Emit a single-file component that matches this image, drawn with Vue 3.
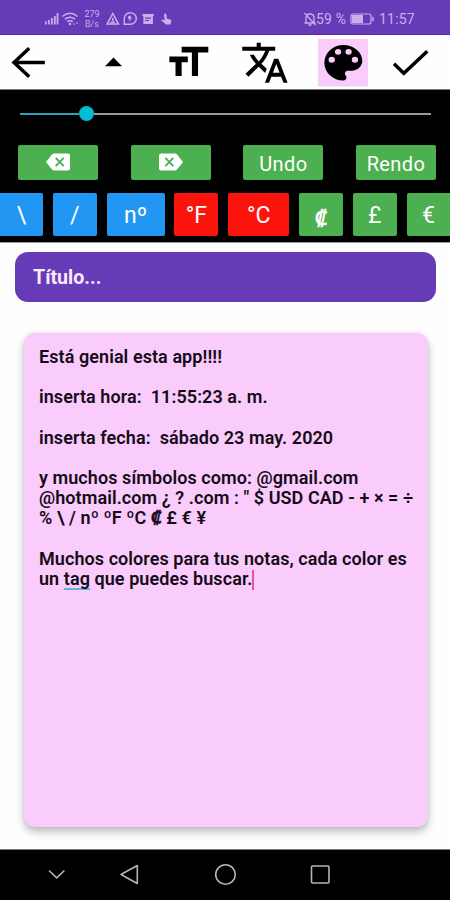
<script setup>
const symbols = [
  { label: '\\', kind: 'blue', wide: 'first' },
  { label: '/', kind: 'blue', wide: '' },
  { label: 'nº', kind: 'blue', wide: 'mid' },
  { label: '°F', kind: 'red', wide: '' },
  { label: '°C', kind: 'red', wide: 'large' },
  { label: '₡', kind: 'green', wide: 'heavy' },
  { label: '£', kind: 'green', wide: '' },
  { label: '€', kind: 'green', wide: '' },
]
</script>

<template>
  <div class="screen">
    <header class="status">
      <svg class="signals" width="40" height="20" viewBox="40 9 40 20">
        <path d="M45.8 24.5v-3M48.8 24.5v-4.5M51.8 24.5v-6.5M54.8 24.5v-8.5M57.5 24.5V13" stroke="currentColor" stroke-width="1.8" />
        <g fill="none" stroke="currentColor" stroke-width="1.6">
          <path d="M62.3 16.5q7.7-6.5 15.2 0M65 19.2q5-4 10 0M67.2 21.7q2.8-2 5.6 0" />
        </g>
        <circle cx="70" cy="24" r="1.3" fill="currentColor" />
        <path d="M74 23v2M77 22v2" stroke="currentColor" />
      </svg>
      <div class="rate"><span>279</span><span>B/s</span></div>
      <svg class="notices" width="72" height="20" viewBox="104 9 72 20">
        <g fill="none" stroke="currentColor" stroke-width="1.5">
          <path d="M112.8 13.5l5.7 10.6h-11.4zM112.8 18v3M110.5 22.3h4.5" />
          <path d="M124.3 24.3v-5.5a6 5.8 0 1 1 6 5.5z" />
        </g>
        <path d="M128.5 15.8h2.8l-.8 2h1.7l-3.4 4 .7-3h-1.7z" fill="currentColor" />
        <path fill-rule="evenodd" d="M142.5 14h11.2v2h-.8v8h-9.5v-8h-.9zM145 17.5v1.2h6v-1.2zm0 2.5v1h4v-1z" fill="currentColor" />
        <path d="M164.2 14q1.7-1.2 2.2.6l.5 4.2 3.6.8q1 .3.8 1.6l-.7 3.3h-4.7l-4.7-4.3q.4-1.2 2.1-.3l1.4.7-.7-5.4z" fill="currentColor" />
      </svg>
      <div class="spacer"></div>
      <svg class="bell" width="14" height="16" viewBox="0 0 14 16">
        <path d="M1.5 12h11M3 11.5V7q0-4 4-4 4 0 4 4v4.5M5.5 14h3M1.5 2l11 12" fill="none" stroke="currentColor" stroke-width="1.3" />
      </svg>
      <span class="percent">59 %</span>
      <svg class="battery" width="25" height="12" viewBox="0 0 25 12">
        <rect x="1" y="1" width="20" height="10" rx="2" fill="none" stroke="currentColor" stroke-width="1.2" />
        <rect x="2" y="2" width="11" height="8" fill="currentColor" />
        <path d="M23 4v4" stroke="currentColor" stroke-width="1.5" />
      </svg>
      <span class="clock">11:57</span>
    </header>

    <nav class="toolbar">
      <svg viewBox="0 35 75 54"><path d="M44.8 62.5H14M29.2 48.3L14 62.5l15.2 14.3" fill="none" stroke="#000" stroke-width="3.5" /></svg>
      <svg viewBox="75 35 76 54"><path d="M105 66.2l8.5-8.6 8.5 8.6z" /></svg>
      <svg viewBox="151 35 76 54"><path transform="translate(163.2 38.8) scale(2.05 1.96)" d="M9 4v3h5v12h3V7h5V4H9zm-6 8h3v7h3v-7h3V9H3v3z" /></svg>
      <svg viewBox="227 35 77 54"><path transform="translate(240.2 38.7) scale(2.06 2)" d="M12.87 15.07l-2.54-2.51.03-.03c1.74-1.94 2.98-4.17 3.71-6.53H17V4h-7V2H8v2H1v1.99h11.17C11.5 7.92 10.44 9.75 9 11.35 8.07 10.32 7.3 9.19 6.69 8h-2c.73 1.63 1.73 3.17 2.98 4.56l-5.09 5.02L4 19l5-5 3.11 3.11.76-2.04zM18.5 10h-2L12 22h2l1.12-3h4.75L21 22h2l-4.5-12zm-2.62 7l1.62-4.33L19.12 17h-3.24z" /></svg>
      <svg viewBox="304 35 78 54">
        <rect x="318" y="39" width="50" height="47.5" fill="#f9ccfb" />
        <path fill-rule="evenodd" transform="translate(318 39) scale(2.11 1.98)" d="M12 3a9 9 0 0 0 0 18c.83 0 1.5-.67 1.5-1.5 0-.39-.15-.74-.39-1.01-.23-.26-.38-.61-.38-.99 0-.83.67-1.5 1.5-1.5H16c2.76 0 5-2.24 5-5 0-4.42-4.03-8-9-8zM6.5 12a1.5 1.5 0 1 1 0-3 1.5 1.5 0 0 1 0 3zm3-4a1.5 1.5 0 1 1 0-3 1.5 1.5 0 0 1 0 3zm5 0a1.5 1.5 0 1 1 0-3 1.5 1.5 0 0 1 0 3zm3 4a1.5 1.5 0 1 1 0-3 1.5 1.5 0 0 1 0 3z" />
      </svg>
      <svg viewBox="382 35 68 54"><path d="M394 63.8l9.8 9.5L427.3 51.2" fill="none" stroke="#000" stroke-width="3.5" /></svg>
    </nav>

    <section class="panel">
      <div class="slider">
        <span class="filled"></span><span class="thumb"></span><span class="rest"></span>
      </div>
      <div class="actions">
        <button class="action">
          <svg width="24" height="18" viewBox="0 0 24 18"><path d="M0 9L6 1.5Q7 .5 8 .5h14Q24 .5 24 2.5v13q0 2-2 2H8q-1 0-2-1z" fill="#fff" /><path d="M9.7 4.8l8 8.4m0-8.4l-8 8.4" stroke="#4caf50" stroke-width="1.9" /></svg>
        </button>
        <button class="action">
          <svg width="24" height="18" viewBox="0 0 24 18"><path d="M24 9l-6-7.5q-1-1-2-1H2q-2 0-2 2v13q0 2 2 2h14q1 0 2-1z" fill="#fff" /><path d="M6.3 4.8l8 8.4m0-8.4l-8 8.4" stroke="#4caf50" stroke-width="1.9" /></svg>
        </button>
        <button class="action">Undo</button>
        <button class="action">Rendo</button>
      </div>
      <div class="symbols">
        <button v-for="s in symbols" :key="s.label" :class="['symbol', s.kind, s.wide]">{{ s.label }}</button>
      </div>
    </section>

    <main class="content">
      <div class="title">Título...</div>
      <article class="note">
        <p>Está genial esta app!!!!</p>
        <p>inserta hora:&nbsp; 11:55:23 a. m.</p>
        <p>inserta fecha:&nbsp; sábado 23 may. 2020</p>
        <p>y muchos símbolos como: @gmail.com<br />@hotmail.com ¿ ? .com : " $ USD CAD - + × = ÷<br />% \ / nº ºF ºC <span class="heavy">₡</span> £ € ¥</p>
        <p>Muchos colores para tus notas, cada color es<br />un <span class="marked">tag</span> que puedes buscar.<span class="caret"></span></p>
      </article>
    </main>

    <footer class="system">
      <svg width="450" height="50" viewBox="0 850 450 50" fill="none" stroke="#b4b4b4" stroke-width="1.6">
        <path d="M49 870.5l7.7 7.3 7.7-7.3" />
        <path d="M137.3 865.5v18l-16.3-9z" stroke-linejoin="round" />
        <circle cx="225.5" cy="874.5" r="9.8" />
        <rect x="311.5" y="866" width="17.5" height="17" rx="1" />
      </svg>
    </footer>
  </div>
</template>

<style>
body { margin: 0; background: #fff; }
</style>

<style scoped>
.screen { width: 450px; height: 900px; display: flex; flex-direction: column; overflow: hidden; background: #fefefe; font-family: Roboto, "Noto Sans", sans-serif; }
.status { height: 35px; flex: none; box-sizing: border-box; padding: 0 34px 0 40px; display: flex; align-items: center; background: #673ab7; border-bottom: 1px solid #552aa0; color: #cbaeec; font-size: 14px; }
.signals { margin-top: 4px; }
.rate { width: 24px; padding-top: 3px; display: flex; flex-direction: column; align-items: center; font-size: 9px; line-height: 10px; }
.notices { margin-top: 4px; }
.spacer { flex: 1; }
.bell, .battery, .clock, .percent { margin-top: 3px; }
.bell { margin-right: -2px; }
.percent { width: 34px; margin-left: 1px; letter-spacing: 0.2px; white-space: nowrap; }
.clock { width: 37px; margin-left: 4px; letter-spacing: 0.2px; }
.toolbar { height: 54px; flex: none; display: grid; grid-template-columns: 75px 76px 76px 77px 78px 68px; }
.toolbar svg { width: 100%; height: 54px; display: block; }
.panel { height: 154px; flex: none; box-sizing: border-box; background: #000; border-top: 1px solid #777; border-bottom: 1px solid #999; overflow: hidden; }
.slider { height: 15px; margin: 16px 19px 0 20px; display: flex; align-items: center; }
.filled { width: 59px; height: 2px; background: #2e9fb5; }
.thumb { width: 15px; height: 15px; border-radius: 50%; background: #00bcd4; }
.rest { flex: 1; height: 2px; background: #999; }
.actions { display: flex; justify-content: space-between; margin: 24px 14px 0 18px; }
button { border: 0; padding: 0; margin: 0; border-radius: 2px; color: #fff; font-family: inherit; display: flex; align-items: center; justify-content: center; box-sizing: border-box; }
.action { width: 80px; height: 35px; background: #4caf50; font-size: 20px; letter-spacing: 0.4px; padding-top: 2px; }
.action svg { margin-top: -3px; }
.symbols { display: flex; gap: 9.8px; margin-top: 13px; }
.symbol { width: 44px; height: 43px; flex: none; font-size: 23px; padding-top: 2px; }
.symbol.first { width: 43px; border-radius: 0 2px 2px 0; }
.symbol.mid { width: 58px; }
.symbol.large { width: 61px; }
.symbol.heavy { font-size: 22px; }
.heavy { -webkit-text-stroke: 0.6px currentColor; }
.blue { background: #2196f3; }
.red { background: #fb140c; }
.green { background: #4caf50; }
.content { flex: 1; display: flex; flex-direction: column; }
.title { margin: 9px 14px 0 15px; height: 50px; box-sizing: border-box; padding-left: 18px; border-radius: 13px; background: #673ab7; color: #f8eaff; font-size: 19.6px; font-weight: 700; line-height: 51px; }
.note { margin: 31px 22px 0 24px; height: 494px; box-sizing: border-box; padding: 14px 0 0 15px; border-radius: 11px; background: #f9ccfb; box-shadow: 0 5px 8px rgba(0, 0, 0, 0.25), 0 0 4px rgba(0, 0, 0, 0.08); color: #150b18; font-size: 18px; font-weight: 600; letter-spacing: 0.07px; line-height: 20.15px; white-space: nowrap; }
.note p { margin: 0 0 20.15px; }
.marked { text-decoration: underline; text-decoration-color: #61b2de; text-decoration-thickness: 2px; text-underline-offset: 3px; text-decoration-skip-ink: none; }
.caret { display: inline-block; width: 2px; height: 20px; margin-right: -2px; vertical-align: -5px; background: #ee4fa0; }
.system { height: 51px; flex: none; box-sizing: border-box; border-top: 1px solid #777; background: #000; }
.system svg { display: block; }
</style>
